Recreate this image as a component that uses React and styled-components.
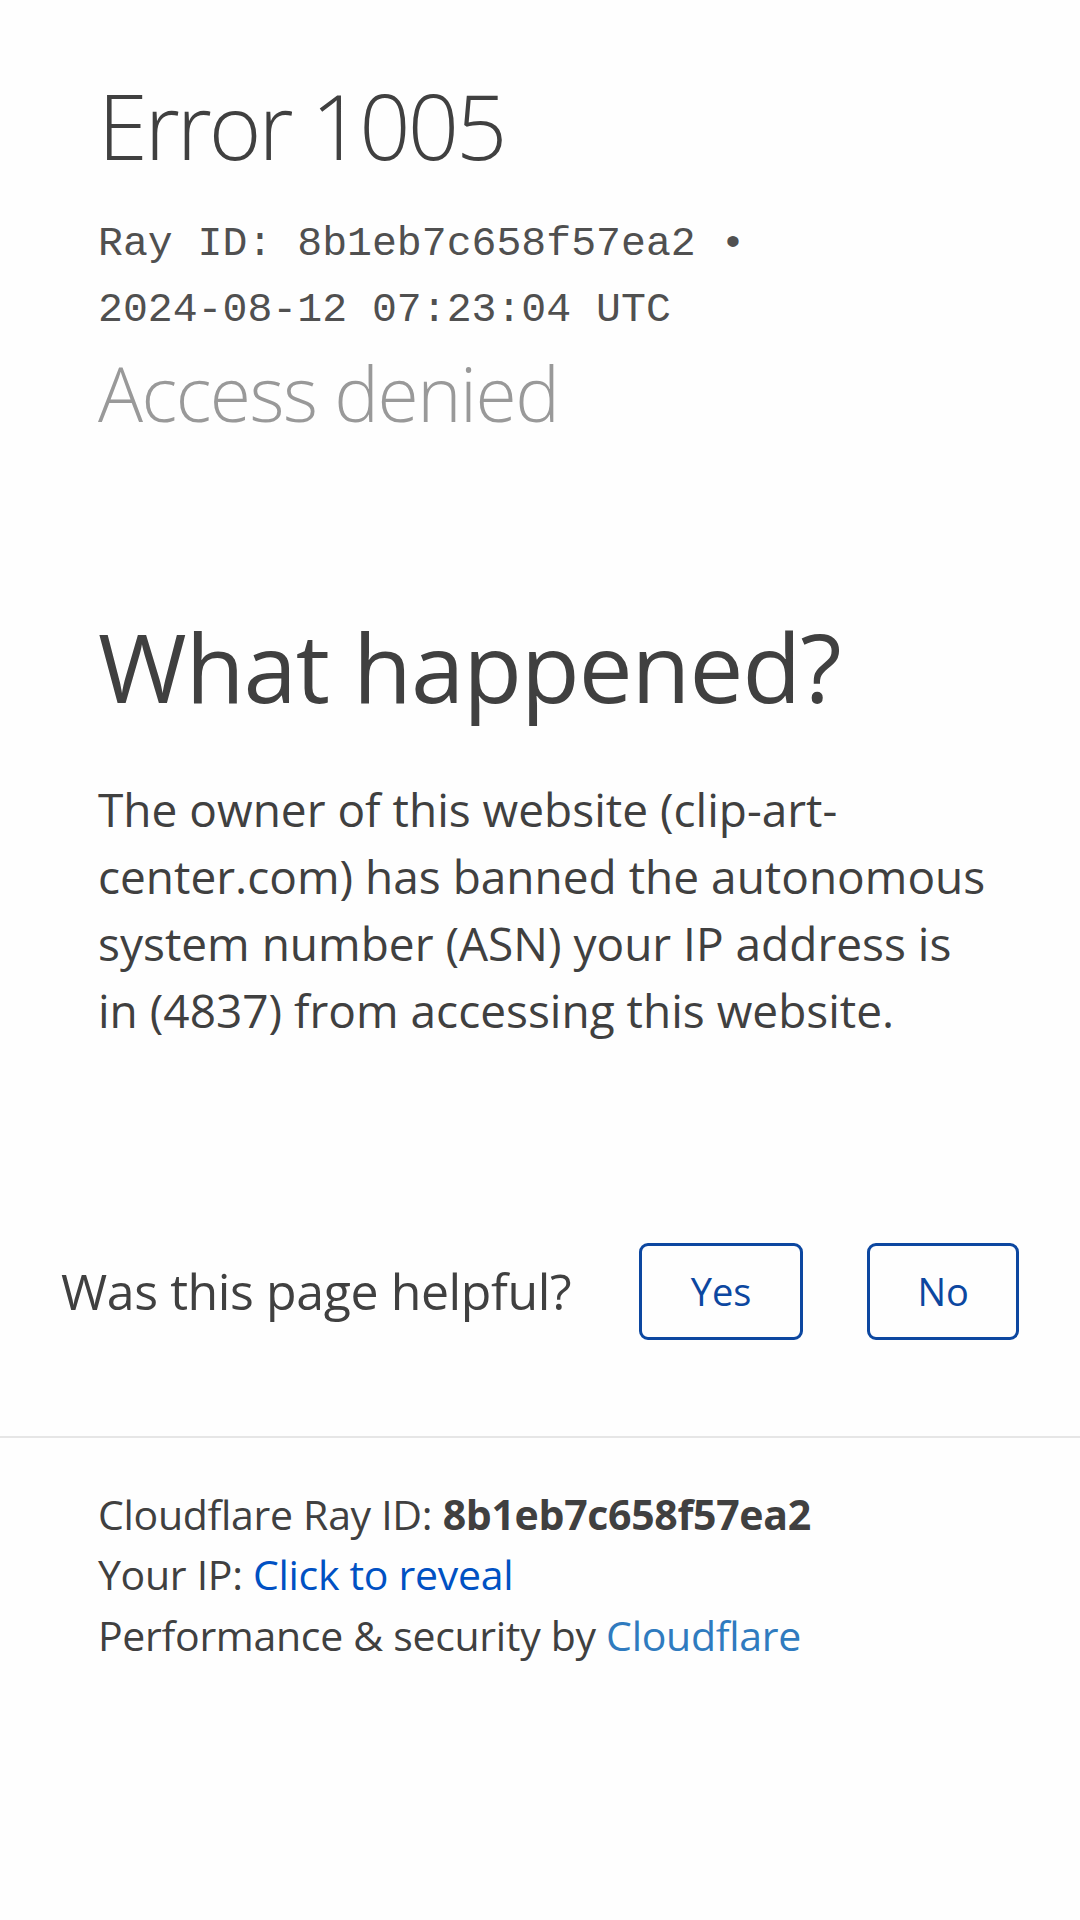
import React from 'react';
import styled, { createGlobalStyle } from 'styled-components';

const GlobalStyle = createGlobalStyle`
  html, body {
    margin: 0;
    padding: 0;
    background: #fefefe;
  }
  body {
    font-family: 'Open Sans', 'Noto Sans', sans-serif;
    color: #404040;
  }
`;

const Page = styled.div`
  width: 1080px;
  min-height: 1920px;
  background: #fefefe;
`;

const Section = styled.section`
  padding: 0 98px;
`;

const Header = styled(Section)`
  padding-top: 76px;
`;

const ErrorTitle = styled.h1`
  margin: 0;
  font-weight: 300;
  font-size: 90px;
  line-height: 1.1;
  letter-spacing: -3px;
  color: #404040;
`;

const RayMeta = styled.div`
  margin-top: 36px;
  font-family: 'Liberation Mono', 'Courier New', monospace;
  font-size: 41.5px;
  line-height: 66px;
  color: #505050;
  max-width: 700px;
`;

const Subtitle = styled.h2`
  margin: 0;
  padding-top: 9px;
  font-weight: 300;
  font-size: 75px;
  line-height: 1.1;
  letter-spacing: -1.5px;
  color: #999999;
`;

const Body = styled(Section)`
  padding: 173px 40px 0 98px;
`;

const SectionTitle = styled.h2`
  margin: 0;
  font-weight: 400;
  font-size: 96px;
  line-height: 1.2;
  letter-spacing: -1px;
  color: #404040;
`;

const Paragraph = styled.p`
  margin: 53px 0 0;
  font-size: 46px;
  line-height: 67px;
  color: #404040;
`;

const Feedback = styled.div`
  display: flex;
  align-items: center;
  margin-top: 199px;
  padding: 0 0 0 61px;
  height: 97px;
`;

const FeedbackText = styled.span`
  font-size: 50px;
  letter-spacing: -0.4px;
  color: #404040;
  margin-right: 68px;
`;

const FeedbackButton = styled.button`
  box-sizing: border-box;
  height: 97px;
  width: ${(p) => p.$w}px;
  margin-right: ${(p) => p.$gap || 0}px;
  background: transparent;
  border: 3px solid #0c47a0;
  border-radius: 9px;
  color: #0c47a0;
  font-family: 'Open Sans', 'Noto Sans', sans-serif;
  font-size: 38px;
  cursor: pointer;
`;

const Divider = styled.hr`
  margin: 96px 0 0;
  border: 0;
  border-top: 2px solid #e6e6e6;
`;

const Footer = styled(Section)`
  padding-top: 46px;
  font-size: 41px;
  line-height: 60.5px;
  letter-spacing: -0.3px;
  color: #404040;
`;

const FooterLine = styled.div``;

const Strong = styled.strong`
  font-weight: 700;
`;

const Link = styled.a`
  color: ${(p) => (p.$muted ? '#2f7bbf' : '#0051c3')};
  text-decoration: none;
  cursor: pointer;
`;

export default function App() {
  return (
    <Page>
      <GlobalStyle />
      <Header>
        <ErrorTitle>Error 1005</ErrorTitle>
        <RayMeta>Ray ID: 8b1eb7c658f57ea2 • 2024-08-12 07:23:04 UTC</RayMeta>
        <Subtitle>Access denied</Subtitle>
      </Header>

      <Body>
        <SectionTitle>What happened?</SectionTitle>
        <Paragraph>
          The owner of this website (clip-art-center.com) has banned the autonomous
          <br />
          system number (ASN) your IP address is
          <br />
          in (4837) from accessing this website.
        </Paragraph>
      </Body>

      <Feedback>
        <FeedbackText>Was this page helpful?</FeedbackText>
        <FeedbackButton $w={164} $gap={64}>Yes</FeedbackButton>
        <FeedbackButton $w={152}>No</FeedbackButton>
      </Feedback>

      <Divider />

      <Footer>
        <FooterLine>
          Cloudflare Ray ID: <Strong>8b1eb7c658f57ea2</Strong>
        </FooterLine>
        <FooterLine>
          Your IP: <Link>Click to reveal</Link>
        </FooterLine>
        <FooterLine>
          Performance &amp; security by <Link $muted>Cloudflare</Link>
        </FooterLine>
      </Footer>
    </Page>
  );
}
